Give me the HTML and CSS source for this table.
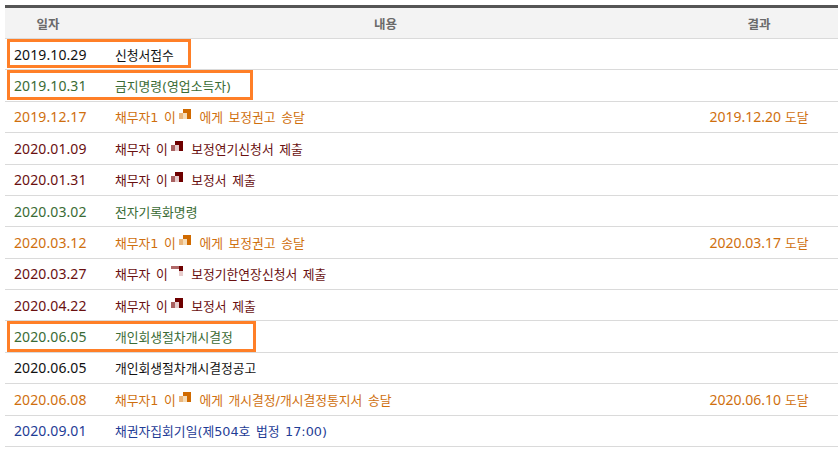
FILE: index.html
```html
<!DOCTYPE html>
<html lang="ko">
<head>
<meta charset="utf-8">
<link rel="stylesheet" href="styles.css">
</head>
<body>
<div class="board">
  <div class="row head">
    <div class="c-date">일자</div>
    <div class="c-body">내용</div>
    <div class="c-res">결과</div>
  </div>

  <div class="row black">
    <div class="c-date">2019.10.29</div>
    <div class="c-body">신청서접수</div>
    <div class="c-res"></div>
    <span class="mark mark-1"></span>
  </div>

  <div class="row green">
    <div class="c-date">2019.10.31</div>
    <div class="c-body">금지명령(영업소득자)</div>
    <div class="c-res"></div>
    <span class="mark mark-2"></span>
  </div>

  <div class="row orange">
    <div class="c-date">2019.12.17</div>
    <div class="c-body">채무자1 이<svg class="mosaic" width="12" height="11" viewBox="0 0 12 11"><rect x="0" y="4" width="4" height="6" fill="#eab67c"/><rect x="4" y="0" width="4" height="4" fill="#d06a00"/><rect x="4" y="4" width="4" height="6" fill="#f5dcb8"/><rect x="8" y="0" width="4" height="10" fill="#d06a00"/></svg> 에게 보정권고 송달</div>
    <div class="c-res"><span class="num">2019.12.20</span> 도달</div>
  </div>

  <div class="row maroon">
    <div class="c-date">2020.01.09</div>
    <div class="c-body">채무자 이<svg class="mosaic" width="12" height="11" viewBox="0 0 12 11"><rect x="0" y="4" width="4" height="6" fill="#a86060"/><rect x="4" y="0" width="4" height="4" fill="#6e0000"/><rect x="4" y="4" width="4" height="6" fill="#e6cccc"/><rect x="8" y="0" width="4" height="10" fill="#6e0000"/></svg> 보정연기신청서 제출</div>
    <div class="c-res"></div>
  </div>

  <div class="row maroon">
    <div class="c-date">2020.01.31</div>
    <div class="c-body">채무자 이<svg class="mosaic" width="12" height="11" viewBox="0 0 12 11"><rect x="0" y="4" width="4" height="6" fill="#a86060"/><rect x="4" y="0" width="4" height="4" fill="#6e0000"/><rect x="4" y="4" width="4" height="6" fill="#e6cccc"/><rect x="8" y="0" width="4" height="10" fill="#6e0000"/></svg> 보정서 제출</div>
    <div class="c-res"></div>
  </div>

  <div class="row green">
    <div class="c-date">2020.03.02</div>
    <div class="c-body">전자기록화명령</div>
    <div class="c-res"></div>
  </div>

  <div class="row orange">
    <div class="c-date">2020.03.12</div>
    <div class="c-body">채무자1 이<svg class="mosaic" width="12" height="11" viewBox="0 0 12 11"><rect x="0" y="4" width="4" height="6" fill="#eab67c"/><rect x="4" y="0" width="4" height="4" fill="#d06a00"/><rect x="4" y="4" width="4" height="6" fill="#f5dcb8"/><rect x="8" y="0" width="4" height="10" fill="#d06a00"/></svg> 에게 보정권고 송달</div>
    <div class="c-res"><span class="num">2020.03.17</span> 도달</div>
  </div>

  <div class="row maroon">
    <div class="c-date">2020.03.27</div>
    <div class="c-body">채무자 이<svg class="mosaic" width="12" height="11" viewBox="0 0 12 11"><rect x="0" y="0" width="8" height="3" fill="#b06868"/><rect x="8" y="0" width="4" height="5" fill="#6e0000"/><rect x="8" y="5" width="4" height="5" fill="#e6cccc"/></svg> 보정기한연장신청서 제출</div>
    <div class="c-res"></div>
  </div>

  <div class="row maroon">
    <div class="c-date">2020.04.22</div>
    <div class="c-body">채무자 이<svg class="mosaic" width="12" height="11" viewBox="0 0 12 11"><rect x="0" y="4" width="4" height="6" fill="#a86060"/><rect x="4" y="0" width="4" height="4" fill="#6e0000"/><rect x="4" y="4" width="4" height="6" fill="#e6cccc"/><rect x="8" y="0" width="4" height="10" fill="#6e0000"/></svg> 보정서 제출</div>
    <div class="c-res"></div>
  </div>

  <div class="row green">
    <div class="c-date">2020.06.05</div>
    <div class="c-body">개인회생절차개시결정</div>
    <div class="c-res"></div>
    <span class="mark mark-3"></span>
  </div>

  <div class="row black">
    <div class="c-date">2020.06.05</div>
    <div class="c-body">개인회생절차개시결정공고</div>
    <div class="c-res"></div>
  </div>

  <div class="row orange">
    <div class="c-date">2020.06.08</div>
    <div class="c-body">채무자1 이<svg class="mosaic" width="12" height="11" viewBox="0 0 12 11"><rect x="0" y="4" width="4" height="6" fill="#eab67c"/><rect x="4" y="0" width="4" height="4" fill="#d06a00"/><rect x="4" y="4" width="4" height="6" fill="#f5dcb8"/><rect x="8" y="0" width="4" height="10" fill="#d06a00"/></svg> 에게 개시결정/개시결정통지서 송달</div>
    <div class="c-res"><span class="num">2020.06.10</span> 도달</div>
  </div>

  <div class="row blue">
    <div class="c-date">2020.09.01</div>
    <div class="c-body">채권자집회기일(제504호 법정 17:00)</div>
    <div class="c-res"></div>
  </div>
</div>
</body>
</html>
```

FILE: styles.css
```css
html, body {
  margin: 0;
  padding: 0;
  background: #ffffff;
}

body {
  padding: 5px 2px 0 5px;
  font-family: "Noto Sans", "Noto Sans CJK KR", sans-serif;
}

.board {
  border-top: 3px solid #555555;
}

.row {
  position: relative;
  display: grid;
  grid-template-columns: 86px 589px 1fr;
  align-items: center;
  height: 31.38px;
  box-sizing: border-box;
  border-bottom: 1px solid #dadada;
}

.row.head {
  height: 31px;
  background: #f3f3f3;
  color: #6a6a6a;
  font-weight: 700;
}

.row.head .c-date,
.row.head .c-body,
.row.head .c-res {
  text-align: center;
  padding: 0;
  font-family: "Noto Sans CJK KR", sans-serif;
  font-size: 12.5px;
  letter-spacing: 0;
  word-spacing: 0;
}

.c-date {
  padding-left: 9px;
  font-size: 14px;
  letter-spacing: 0.1px;
  white-space: nowrap;
}

.c-body {
  padding-left: 24px;
  font-family: "DejaVu Sans", "Noto Sans CJK KR", sans-serif;
  font-size: 12.8px;
  word-spacing: 1.5px;
  white-space: nowrap;
}

.c-res {
  text-align: center;
  font-family: "DejaVu Sans", "Noto Sans CJK KR", sans-serif;
  font-size: 12.8px;
  white-space: nowrap;
}

.c-res .num {
  font-family: "Noto Sans", sans-serif;
  font-size: 14px;
}

.mosaic {
  display: inline-block;
  margin-left: 3px;
  margin-right: 3px;
  vertical-align: 2px;
}

.black { color: #111111; }
.green { color: #3a6b35; }
.orange { color: #cf6f0e; }
.maroon { color: #6a1010; }
.blue { color: #1f3d96; }

.mark {
  position: absolute;
  left: 2px;
  top: 0;
  border: 3px solid #ff7f27;
  box-sizing: border-box;
  pointer-events: none;
}

.mark-1 { width: 184px; height: 29px; }
.mark-2 { width: 246px; height: 30px; }
.mark-3 { width: 249px; height: 31px; }
```
